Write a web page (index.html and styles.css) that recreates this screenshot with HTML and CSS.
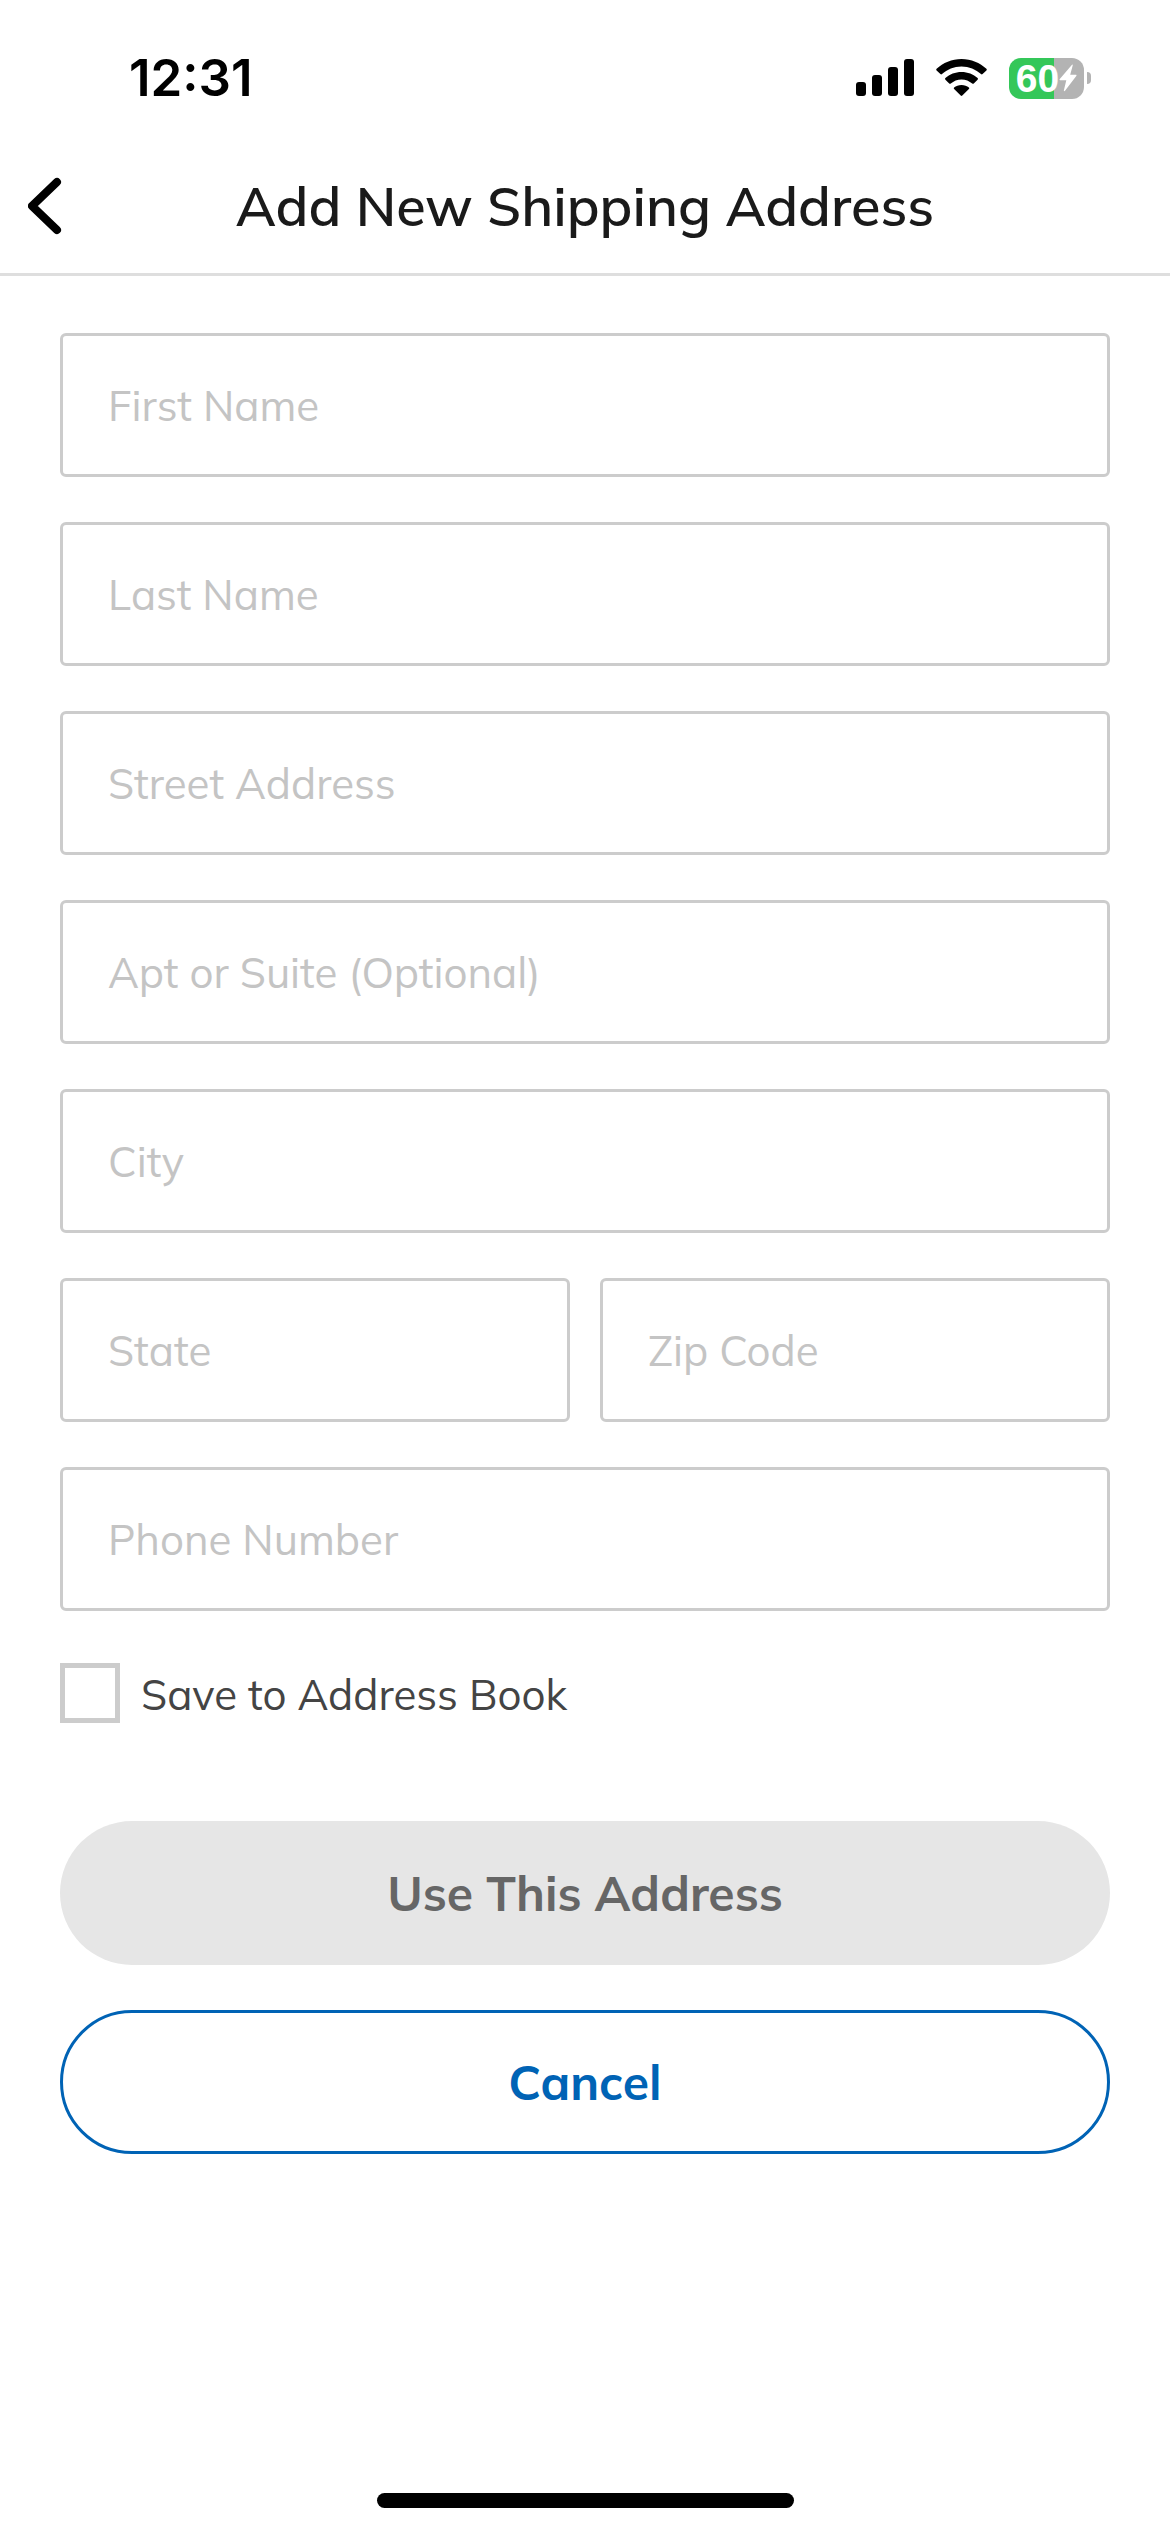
FILE: index.html
```
<!DOCTYPE html>
<html lang="en">
<head>
  <meta charset="utf-8">
  <meta name="viewport" content="width=device-width, initial-scale=1">
  <title>Add New Shipping Address</title>
  <link rel="stylesheet" href="styles.css">
</head>
<body>

<div class="status-bar">
  <span class="time">12:31</span>
  <div class="status-icons">
    <svg class="signal" width="58" height="38" viewBox="0 0 58 38" aria-hidden="true">
      <rect x="0" y="23" width="10" height="14" rx="3"/>
      <rect x="16" y="16" width="10" height="21" rx="3"/>
      <rect x="32" y="8" width="10" height="29" rx="3"/>
      <rect x="48" y="0" width="10" height="37" rx="3"/>
    </svg>
    <svg class="wifi" width="51" height="38" viewBox="0 0 51 38" aria-hidden="true">
      <path d="M25.5 0C35.200 0 44 3.800 50.400 9.800Q51.200 10.600 50.400 11.400L46.600 15.100Q45.800 15.900 45 15.100C39.900 10.400 33 7.500 25.500 7.500S11.100 10.400 6 15.100Q5.200 15.900 4.400 15.100L.6 11.400Q-.2 10.600.6 9.800C7 3.800 15.800 0 25.500 0Z"/>
      <path d="M25.500 13C31.700 13 37.400 15.300 41.600 19.100Q42.400 19.900 41.600 20.700L37.800 24.500Q37 25.200 36.200 24.500C33.400 22 29.600 20.400 25.500 20.400S17.600 22 14.800 24.500Q14 25.200 13.200 24.500L9.400 20.700Q8.600 19.900 9.400 19.100C13.600 15.300 19.300 13 25.500 13Z"/>
      <path d="M25.500 26C28.400 26 31 27 32.900 28.600Q33.700 29.300 32.900 30.100L26.300 36.600Q25.500 37.400 24.700 36.600L18.100 30.100Q17.300 29.300 18.100 28.600C20 27 22.600 26 25.500 26Z"/>
    </svg>
    <div class="battery">
      <div class="battery-body">
        <span class="battery-level">60</span>
        <svg class="bolt" width="18" height="28" viewBox="0 0 18 28" aria-hidden="true">
          <path d="M13 .8Q14 .2 13.700 1.500L11.200 10.800H17Q18 10.900 17.300 11.900L6 26.800Q4.700 28 4.900 26.200L7.300 16.300H1Q0 16.100.8 15Z"/>
        </svg>
      </div>
      <div class="battery-tip"></div>
    </div>
  </div>
</div>

<header class="header">
  <button type="button" class="back" aria-label="Back">
    <svg width="34" height="58" viewBox="0 0 34 58" aria-hidden="true">
      <path d="M29 5L4 29L29 53"/>
    </svg>
  </button>
  <h1>Add New Shipping Address</h1>
</header>

<form class="address-form">
  <input type="text" class="field" name="firstName" placeholder="First Name" aria-label="First Name">
  <input type="text" class="field" name="lastName" placeholder="Last Name" aria-label="Last Name">
  <input type="text" class="field" name="street" placeholder="Street Address" aria-label="Street Address">
  <input type="text" class="field" name="apt" placeholder="Apt or Suite (Optional)" aria-label="Apt or Suite (Optional)">
  <input type="text" class="field" name="city" placeholder="City" aria-label="City">
  <div class="field-row">
    <input type="text" class="field" name="state" placeholder="State" aria-label="State">
    <input type="text" class="field" name="zip" placeholder="Zip Code" aria-label="Zip Code">
  </div>
  <input type="tel" class="field" name="phone" placeholder="Phone Number" aria-label="Phone Number">

  <div class="save-row">
    <input type="checkbox" class="checkbox" id="save" name="save">
    <label for="save">Save to Address Book</label>
  </div>

  <button type="submit" class="btn btn-primary" disabled>Use This Address</button>
  <button type="button" class="btn btn-outline">Cancel</button>
</form>

<div class="home-indicator"></div>

</body>
</html>
```
FILE: styles.css
```
* {
  box-sizing: border-box;
}

body {
  margin: 0;
  min-height: 100vh;
  display: flex;
  flex-direction: column;
  background: #fff;
  color: #1a1a1a;
  font-family: Mulish, "Open Sans", sans-serif;
}

/* status bar */
.status-bar {
  display: flex;
  justify-content: space-between;
  height: 141px;
  padding: 48px 79px 33px 129px;
  color: #000;
}

.time {
  font-family: Inter, sans-serif;
  font-size: 51px;
  font-weight: 600;
  line-height: 60px;
}

.status-icons {
  display: flex;
  align-items: center;
  gap: 22px;
}

.battery {
  display: flex;
  align-items: center;
  gap: 3px;
}

.battery-body {
  display: flex;
  align-items: center;
  justify-content: center;
  width: 75px;
  height: 41px;
  border-radius: 12px;
  background: linear-gradient(to right, #34c759 60%, #b3b3b3 60%);
}

.battery-level {
  color: #fff;
  font-family: "Liberation Sans", sans-serif;
  font-size: 39px;
  font-weight: 700;
  line-height: 41px;
}

.bolt {
  fill: #fff;
}

.battery-tip {
  width: 4px;
  height: 12px;
  border-radius: 0 6px 6px 0;
  background: #b3b3b3;
}

/* title bar */
.header {
  display: grid;
  grid-template-columns: 90px 1fr 90px;
  align-items: center;
  height: 135px;
  padding-bottom: 2px;
  border-bottom: 3px solid #dedede;
}

.header h1 {
  margin: 0;
  font-size: 54px;
  font-weight: 600;
  line-height: 72px;
  text-align: center;
  white-space: nowrap;
}

.back {
  display: flex;
  padding: 0 0 0 28px;
  border: none;
  background: none;
  cursor: pointer;
}

.back path {
  fill: none;
  stroke: #000;
  stroke-width: 8;
  stroke-linecap: round;
  stroke-linejoin: round;
}

/* form */
.address-form {
  display: flex;
  flex-direction: column;
  gap: 45px;
  padding: 57px 60px;
}

.field {
  width: 100%;
  min-width: 0;
  height: 144px;
  padding: 0 45px;
  border: 3px solid #ccc;
  border-radius: 6px;
  background: #fff;
  color: #444;
  font-family: inherit;
  font-size: 42px;
}

.field::placeholder {
  color: #c4c4c4;
  opacity: 1;
}

.field-row {
  display: grid;
  grid-template-columns: 1fr 1fr;
  gap: 30px;
}

.save-row {
  display: flex;
  align-items: flex-end;
  gap: 21px;
  padding: 7px 0 53px;
  color: #444;
  font-size: 42px;
  line-height: 56px;
}

.checkbox {
  appearance: none;
  width: 60px;
  height: 60px;
  margin: 0;
  border: 5px solid #ccc;
  background: #fff;
}

.checkbox:checked {
  background: #0063b5;
}

.btn {
  height: 144px;
  border: 3px solid transparent;
  border-radius: 72px;
  font-family: inherit;
  font-size: 48px;
  font-weight: 700;
}

.btn-primary {
  background: #e6e6e6;
  color: #666;
}

.btn-outline {
  border-color: #0063b5;
  background: #fff;
  color: #0063b5;
}

.home-indicator {
  width: 417px;
  height: 15px;
  margin: auto auto 24px;
  border-radius: 8px;
  background: #000;
}
```
